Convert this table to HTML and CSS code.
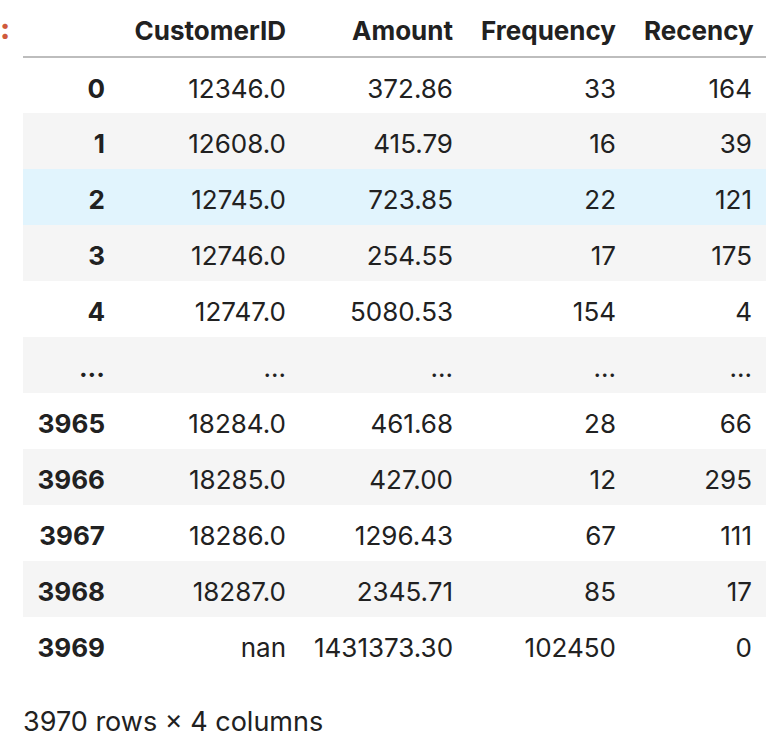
FILE: index.html
```html
<!DOCTYPE html>
<html>
<head>
<meta charset="utf-8">
<link rel="stylesheet" href="styles.css">
</head>
<body>
<div class="cell">
  <div class="prompt"><span class="prompt-text">:</span></div>
  <div class="output">
    <table class="dataframe">
      <thead>
        <tr>
          <th class="c-idx"></th>
          <th class="c-id">CustomerID</th>
          <th class="c-amt">Amount</th>
          <th class="c-freq">Frequency</th>
          <th class="c-rec">Recency</th>
        </tr>
      </thead>
      <tbody>
        <tr><th>0</th><td>12346.0</td><td>372.86</td><td>33</td><td>164</td></tr>
        <tr class="alt"><th>1</th><td>12608.0</td><td>415.79</td><td>16</td><td>39</td></tr>
        <tr class="hover"><th>2</th><td>12745.0</td><td>723.85</td><td>22</td><td>121</td></tr>
        <tr class="alt"><th>3</th><td>12746.0</td><td>254.55</td><td>17</td><td>175</td></tr>
        <tr><th>4</th><td>12747.0</td><td>5080.53</td><td>154</td><td>4</td></tr>
        <tr class="alt"><th>...</th><td>...</td><td>...</td><td>...</td><td>...</td></tr>
        <tr><th>3965</th><td>18284.0</td><td>461.68</td><td>28</td><td>66</td></tr>
        <tr class="alt"><th>3966</th><td>18285.0</td><td>427.00</td><td>12</td><td>295</td></tr>
        <tr><th>3967</th><td>18286.0</td><td>1296.43</td><td>67</td><td>111</td></tr>
        <tr class="alt"><th>3968</th><td>18287.0</td><td>2345.71</td><td>85</td><td>17</td></tr>
        <tr><th>3969</th><td>nan</td><td>1431373.30</td><td>102450</td><td>0</td></tr>
      </tbody>
    </table>
    <p class="shape">3970 rows × 4 columns</p>
  </div>
</div>
</body>
</html>
```

FILE: styles.css
```css
html, body {
  margin: 0;
  padding: 0;
  background: #ffffff;
}
body {
  font-family: Inter, "Noto Sans", "Liberation Sans", sans-serif;
  color: #212121;
}
.cell {
  display: flex;
  align-items: flex-start;
}
.prompt {
  width: 23px;
  flex: 0 0 23px;
  height: 57px;
  position: relative;
}
.prompt-text {
  position: absolute;
  left: 0;
  top: 14px;
  font-size: 29px;
  font-weight: 800;
  color: #cf5a3c;
  line-height: 1;
  white-space: nowrap;
}
.output {
  flex: 0 0 auto;
}
.dataframe {
  border-collapse: collapse;
  border-spacing: 0;
  font-size: 26px;
  table-layout: fixed;
  width: 743px;
}
.dataframe th,
.dataframe td {
  padding: 0 14px;
  text-align: right;
  white-space: nowrap;
  vertical-align: middle;
}
.dataframe thead th {
  height: 57px;
  font-weight: 700;
  border-bottom: 2px solid #bdbdbd;
  padding-top: 4px;
  box-sizing: border-box;
}
.dataframe tbody tr {
  height: 56px;
}
.dataframe tbody th,
.dataframe tbody td {
  padding-top: 5px;
}
.dataframe tbody th {
  font-weight: 700;
}
.c-idx { width: 96px; }
.c-id { width: 181px; }
.c-amt { width: 167px; }
.c-freq { width: 163px; }
.c-rec { width: 136px; }
.dataframe tbody tr.alt {
  background: #f5f5f5;
}
.dataframe tbody tr.hover {
  background: #e1f4fd;
}
.shape {
  margin: 33px 0 0 0;
  font-size: 27px;
  line-height: 32px;
}
```
